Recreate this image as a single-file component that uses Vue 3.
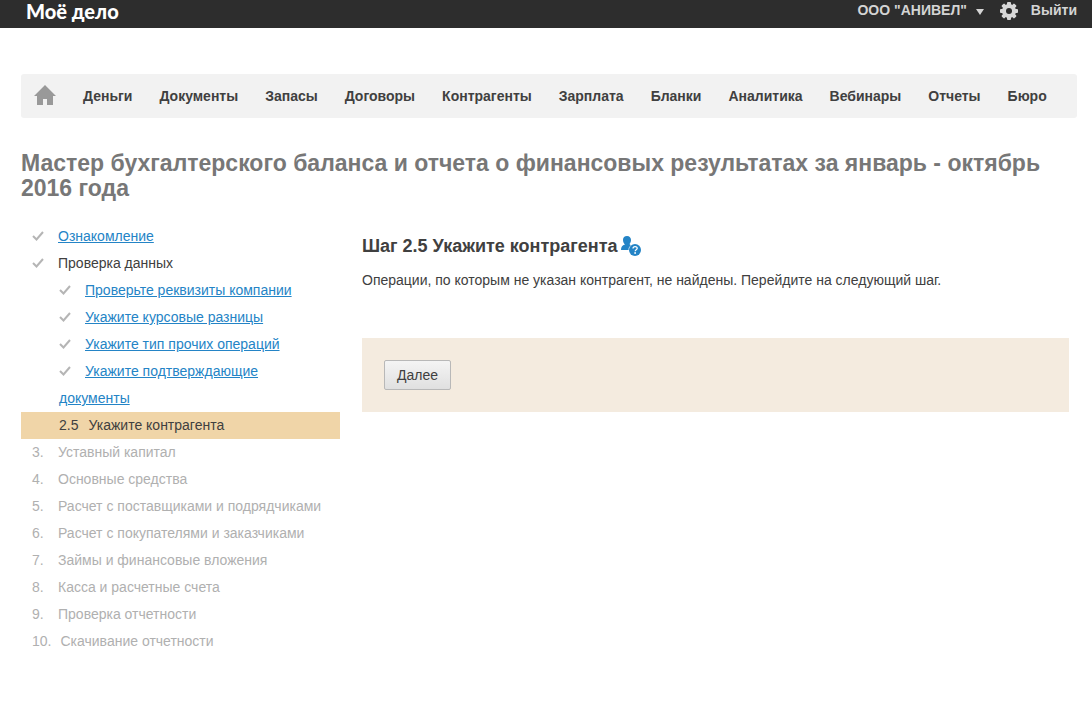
<script setup>
const nav = ['Деньги', 'Документы', 'Запасы', 'Договоры', 'Контрагенты', 'Зарплата', 'Бланки', 'Аналитика', 'Вебинары', 'Отчеты', 'Бюро']
const substeps = ['Проверьте реквизиты компании', 'Укажите курсовые разницы', 'Укажите тип прочих операций', 'Укажите подтверждающие документы']
const upcoming = [
  [3, 'Уставный капитал'],
  [4, 'Основные средства'],
  [5, 'Расчет с поставщиками и подрядчиками'],
  [6, 'Расчет с покупателями и заказчиками'],
  [7, 'Займы и финансовые вложения'],
  [8, 'Касса и расчетные счета'],
  [9, 'Проверка отчетности'],
  [10, 'Скачивание отчетности'],
]
</script>

<template>
  <div class="page">
    <header class="topbar">
      <a class="logo" href="#">Моё дело</a>
      <div class="account">
        <button class="company" type="button">
          ООО "АНИВЕЛ"
          <svg width="8" height="6" viewBox="0 0 8 6" aria-hidden="true"><path d="M0 0h8L4 6z" fill="#d4d4d4" /></svg>
        </button>
        <a class="gear" href="#" aria-label="Настройки">
          <svg width="18" height="18" viewBox="0 0 18 18">
            <g fill="#d8d8d8">
              <rect v-for="a in [0, 45, 90, 135]" :key="a" x="7" y="0" width="4" height="18" rx="1" :transform="`rotate(${a} 9 9)`" />
              <circle cx="9" cy="9" r="7" />
            </g>
            <circle cx="9" cy="9" r="3" fill="#2d2d2d" />
          </svg>
        </a>
        <a class="exit" href="#">Выйти</a>
      </div>
    </header>

    <nav class="nav">
      <a class="home" href="#" aria-label="Главная">
        <svg width="22" height="20" viewBox="0 0 22 20"><path d="M11 0 22 11h-3v9h-6v-6H9v6H3v-9H0z" fill="#999" /></svg>
      </a>
      <a v-for="item in nav" :key="item" href="#">{{ item }}</a>
    </nav>

    <h1>Мастер бухгалтерского баланса и отчета о финансовых результатах за январь - октябрь 2016 года</h1>

    <div class="body">
      <ul class="steps">
        <li>
          <span class="mark"><svg width="12" height="10" viewBox="0 0 12 10"><path d="M1 5 4.5 8.5 11 1" /></svg></span><a href="#">Ознакомление</a>
        </li>
        <li>
          <span class="mark"><svg width="12" height="10" viewBox="0 0 12 10"><path d="M1 5 4.5 8.5 11 1" /></svg></span>Проверка данных
        </li>
        <li v-for="s in substeps" :key="s" class="sub">
          <span class="mark"><svg width="12" height="10" viewBox="0 0 12 10"><path d="M1 5 4.5 8.5 11 1" /></svg></span><a href="#">{{ s }}</a>
        </li>
        <li class="sub current" aria-current="step"><span class="num">2.5</span>Укажите контрагента</li>
        <li v-for="[n, label] in upcoming" :key="n" class="future"><span class="mark num">{{ n }}.</span>{{ label }}</li>
      </ul>

      <main class="content">
        <h2>
          Шаг 2.5 Укажите контрагента
          <a class="help" href="#" aria-label="Помощь консультанта">
            <svg width="20" height="20" viewBox="0 0 20 20">
              <path d="M6 0C8.600 0 10 1.800 10 4c0 1.700-.7 3-1.500 4C9 9 11 9.500 12 10v4H0C0 11 1 9.500 4 8.500 3 7.500 2 6 2 4 2 1.500 3.500 0 6 0z" fill="#2484c6" />
              <circle cx="14" cy="14" r="6.500" fill="#fff" />
              <circle cx="14" cy="14" r="6" fill="#2484c6" />
              <path d="M12 12.600c0-2.800 4.200-2.600 4.200-.3 0 1.500-2 1.500-2 3" fill="none" stroke="#fff" stroke-width="1.300" />
              <circle cx="14.100" cy="17" r=".9" fill="#fff" />
            </svg>
          </a>
        </h2>
        <p>Операции, по которым не указан контрагент, не найдены. Перейдите на следующий шаг.</p>
        <div class="actions"><button type="button">Далее</button></div>
      </main>
    </div>
  </div>
</template>

<style>
body { margin: 0; background: #fff; }
</style>

<style scoped>
.page { font: 14px/20px "Liberation Sans", Arial, sans-serif; color: #404040; }
.topbar { display: flex; justify-content: space-between; height: 28px; padding: 0 15px 0 26px; box-sizing: border-box; background: #2d2d2d; }
.topbar a { text-decoration: none; }
.logo { font: 900 20px/22px Lato, "Open Sans", sans-serif; color: #fff; }
.account { display: flex; height: 20px; font-weight: bold; color: #d4d4d4; }
.company { display: flex; align-items: center; gap: 9px; padding: 0; border: 0; background: none; font: inherit; color: inherit; }
.company svg { margin-top: 4px; }
.gear { display: flex; margin: 2px 13px 0 16px; }
.exit { color: #d4d4d4; }
.nav { display: flex; align-items: center; gap: 27px; height: 44px; margin: 46px 15px 0 21px; padding: 0 13px; box-sizing: border-box; border-radius: 3px; background: #f2f2f2; }
.nav a { color: #404040; font-weight: bold; text-decoration: none; white-space: nowrap; }
.nav .home { display: flex; padding-bottom: 2px; }
h1 { margin: 33px 21px 0; font-size: 23px; line-height: 25px; color: #777; }
.body { display: flex; gap: 22px; margin: 22px 23px 0 21px; }
.steps { flex: 0 0 319px; margin: 0; padding: 0; list-style: none; line-height: 27px; }
.steps li { padding-left: 11px; }
.steps .sub { padding-left: 38px; padding-right: 38px; }
.steps a { color: #2484c6; text-decoration: underline; }
.mark { display: inline-block; min-width: 26px; }
.mark svg { display: inline-block; fill: none; stroke: #b5b5b5; stroke-width: 2; }
.current { background: #f0d5a8; }
.current .num { margin-right: 10px; }
.future { color: #b0b0b0; }
.future .num { box-sizing: border-box; padding-right: 9px; }
.content { flex: 1; min-width: 0; }
h2 { display: flex; align-items: center; gap: 4px; margin: 13px 0 0; font-size: 18px; line-height: 20px; }
.help { display: flex; }
p { margin: 14px 0 0; }
.actions { margin-top: 48px; padding: 22px; background: #f4ebdf; }
.actions button { display: block; height: 30px; padding: 0 12px; border: 1px solid #b8b8b8; border-radius: 2px; background: linear-gradient(#f4f4f4, #e0e0e0); font: inherit; color: #404040; }
</style>
